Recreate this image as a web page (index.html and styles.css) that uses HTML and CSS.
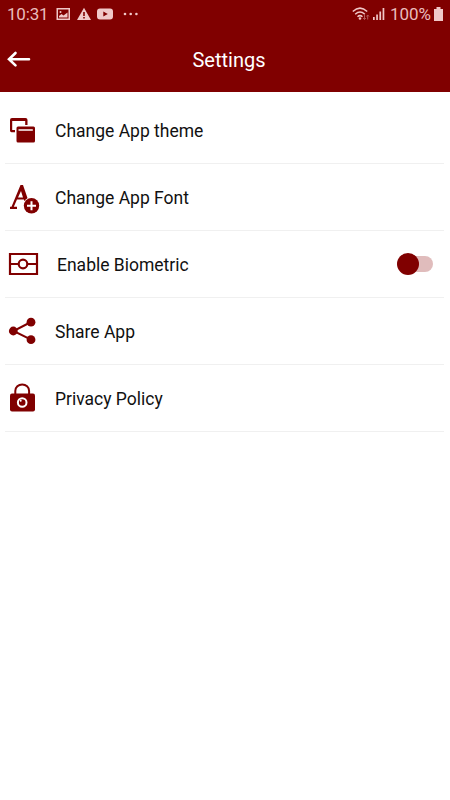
FILE: index.html
```
<!DOCTYPE html>
<html lang="en">
<head>
    <meta charset="UTF-8">
    <meta name="viewport" content="width=device-width, initial-scale=1.0">
    <title>Settings</title>
    <link rel="stylesheet" href="styles.css">
</head>
<body>
    <div class="statusbar">
        <span class="time">10:31</span>
        <svg class="notifications" width="84" height="14" viewBox="0 0 84 14">
            <path fill-rule="evenodd" d="M.5 1H14v12H.5zM2 2.500v9h10.500v-9zM3 10.500V9l2.500-2 2 1.500 4-3v5z"/>
            <circle cx="4.500" cy="5" r="1"/>
            <path fill-rule="evenodd" d="M28 .8L35 13H21zM27.200 5v4h1.600V5zM27.200 10v1.600h1.600V10z"/>
            <path fill-rule="evenodd" d="M44 1.500h10q3 0 3 3v5q0 3-3 3H44q-3 0-3-3v-5q0-3 3-3zM47.300 4.500v5l4.500-2.500z"/>
            <circle cx="69" cy="7" r="1.300"/>
            <circle cx="74.700" cy="7" r="1.300"/>
            <circle cx="80.400" cy="7" r="1.300"/>
        </svg>
        <svg class="signal" width="34" height="14" viewBox="0 0 34 14">
            <path class="wifi" d="M.8 4.500Q8-2.200 15.200 4.500M3.200 7.200Q8 2.800 12.800 7.200M5.500 9.700Q8 7.500 10.500 9.700"/>
            <circle cx="8" cy="11.500" r="1.300"/>
            <path class="data" d="M12.500 8v4.500M11.200 11l1.300 1.500 1.300-1.500M15.700 12.500V8M14.400 9.500L15.700 8l1.300 1.500"/>
            <path d="M21 10h1.700v3H21zM24.200 7.500h1.700V13h-1.700zM27.400 4.500h1.700V13h-1.700zM30.600 1h1.700v12h-1.700z"/>
        </svg>
        <span class="percent">100%</span>
        <svg class="battery" width="9" height="14" viewBox="0 0 9 14">
            <path d="M2.500 0h4v2H9v12H0V2h2.500z"/>
        </svg>
    </div>

    <header class="header">
        <svg class="back" width="24" height="18" viewBox="0 0 24 18">
            <path d="M8.500 2L2 8.200l6.500 6.200M2 8.200h20"/>
        </svg>
        <h1>Settings</h1>
    </header>

    <ul class="settings">
        <li>
            <svg class="icon" viewBox="0 0 36 36">
                <path d="M7 6h13.500q2 0 2 2v5h-2.300V9H7.200v9H10v2.300H6.500Q5 20.300 5 18.500V8q0-2 2-2z"/>
                <path fill-rule="evenodd" d="M13 14.500h15.500q1.500 0 1.500 1.500v13q0 1.500-1.500 1.500H13q-1.500 0-1.500-1.500V16q0-1.500 1.500-1.500zM13.500 17.300v1.500h14.300v-1.500z"/>
            </svg>
            <span>Change App theme</span>
        </li>
        <li>
            <svg class="icon" viewBox="0 0 36 36">
                <path fill-rule="evenodd" d="M15.500 6h2.500l5.500 16h-4l-.7-1.500H12l-3.200 7.300H12V30H5v-2.200h1.500zM16 12l-3 6.500h5z"/>
                <circle class="halo" cx="26.500" cy="26.700" r="8.500"/>
                <circle cx="26.500" cy="26.700" r="7.700"/>
                <path class="plus" d="M26.500 22.200v9M22 26.700h9"/>
            </svg>
            <span>Change App Font</span>
        </li>
        <li>
            <svg class="icon outline" viewBox="0 0 36 36">
                <path d="M5 8h27v20H5zM5 18h8.700M22.300 18H32"/>
                <circle cx="18" cy="18" r="4.300"/>
            </svg>
            <span class="biometric">Enable Biometric</span>
            <div class="switch"></div>
        </li>
        <li>
            <svg class="icon" viewBox="0 0 36 36">
                <path class="links" d="M26 9L8.500 18 26 26.700"/>
                <circle cx="26" cy="9.200" r="4.400"/>
                <circle cx="8.300" cy="18" r="4.400"/>
                <circle cx="26" cy="26.700" r="4.400"/>
            </svg>
            <span>Share App</span>
        </li>
        <li>
            <svg class="icon" viewBox="0 0 36 36">
                <path class="links" d="M10.300 14v-3a6.900 6.600 0 0 1 13.800 0v3"/>
                <rect x="5" y="13.500" width="25" height="18" rx="2"/>
                <circle class="lens" cx="17.200" cy="22.500" r="4.300"/>
                <circle class="glint" cx="15.700" cy="20.800" r="1"/>
            </svg>
            <span>Privacy Policy</span>
        </li>
    </ul>
</body>
</html>
```
FILE: styles.css
```
body {
    margin: 0;
    font-family: Roboto, sans-serif;
    background-color: #fff;
    color: #111;
}
.statusbar {
    display: flex;
    align-items: center;
    height: 28px;
    padding: 0 7px;
    background-color: #800000;
    color: #e9bcbc;
    font-size: 17px;
}
.statusbar svg {
    fill: #f0c8c8;
}
.time {
    width: 41px;
    letter-spacing: -0.2px;
}
.notifications {
    margin-left: 8px;
}
.signal {
    margin-left: auto;
}
.signal .wifi {
    fill: none;
    stroke: #f0c8c8;
    stroke-width: 1.5;
}
.signal .data {
    fill: none;
    stroke: #b45a5a;
}
.percent {
    margin: 0 3px 0 4px;
}
.header {
    display: grid;
    grid-template-columns: 24px 1fr 23px;
    align-items: center;
    height: 64px;
    padding: 0 0 0 7px;
    box-sizing: border-box;
    background-color: #800000;
    color: #fff;
}
.header h1 {
    margin: 0;
    font-size: 20px;
    font-weight: 400;
    text-align: center;
}
.back {
    fill: none;
    stroke: #fff;
    stroke-width: 2.6;
    stroke-linecap: round;
}
.settings {
    margin: 0;
    padding: 5px 6px 0 5px;
    list-style: none;
}
.settings li {
    display: flex;
    align-items: center;
    height: 66px;
    border-bottom: 1px solid #f0f0f0;
    font-size: 17.5px;
}
.settings span {
    padding-top: 2px;
}
.icon {
    width: 36px;
    height: 36px;
    margin-right: 14px;
    fill: #800000;
}
.outline {
    fill: none;
    stroke: #800000;
    stroke-width: 2.2;
}
.links {
    fill: none;
    stroke: #800000;
    stroke-width: 2;
}
.halo, .glint {
    fill: #fff;
}
.plus {
    stroke: #fff;
    stroke-width: 2;
}
.lens {
    stroke: #fff;
    stroke-width: 2;
}
.biometric {
    margin-left: 2px;
}
.switch {
    display: flex;
    align-items: center;
    width: 35px;
    height: 16px;
    margin: 0 11px 0 auto;
    border-radius: 8px;
    background-color: #e0bcbc;
}
.switch::before {
    content: "";
    width: 22px;
    height: 22px;
    margin-left: -1px;
    border-radius: 50%;
    background-color: #800000;
}
```
